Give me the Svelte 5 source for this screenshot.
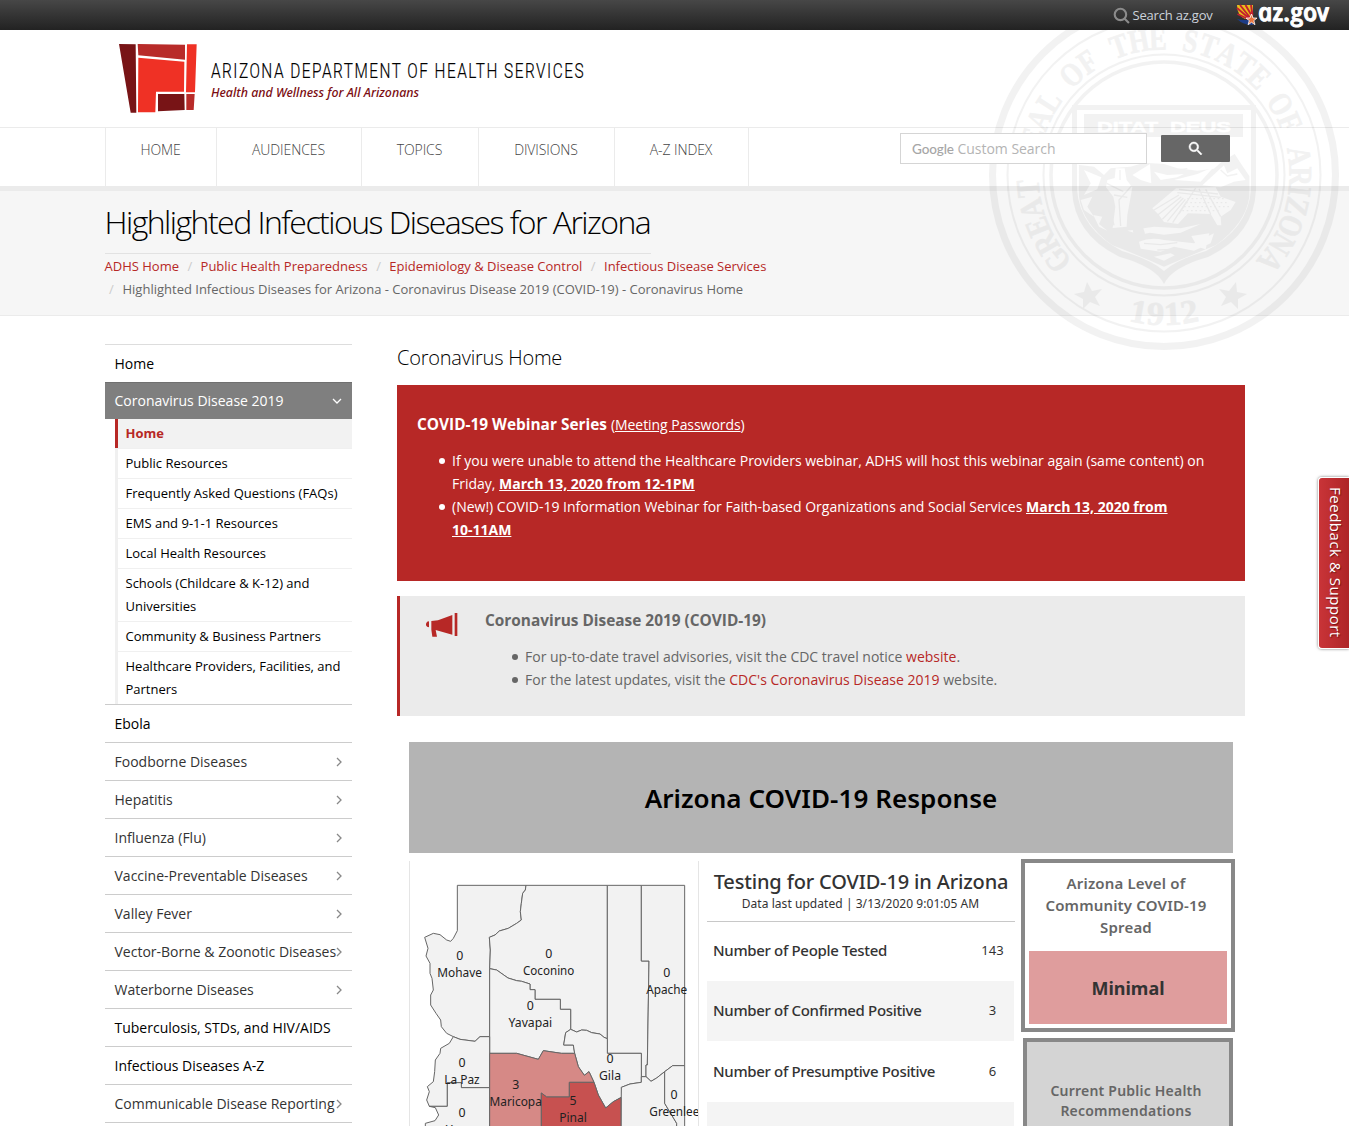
<script>
  const navItems = ['HOME', 'AUDIENCES', 'TOPICS', 'DIVISIONS', 'A-Z INDEX'];
  const crumbs = ['ADHS Home', 'Public Health Preparedness', 'Epidemiology & Disease Control', 'Infectious Disease Services'];
  const subItems = [
    'Public Resources',
    'Frequently Asked Questions (FAQs)',
    'EMS and 9-1-1 Resources',
    'Local Health Resources',
    'Schools (Childcare & K-12) and Universities',
    'Community & Business Partners',
    'Healthcare Providers, Facilities, and Partners'
  ];
  const topics = [
    { label: 'Ebola', more: false },
    { label: 'Foodborne Diseases', more: true },
    { label: 'Hepatitis', more: true },
    { label: 'Influenza (Flu)', more: true },
    { label: 'Vaccine-Preventable Diseases', more: true },
    { label: 'Valley Fever', more: true },
    { label: 'Vector-Borne & Zoonotic Diseases', more: true },
    { label: 'Waterborne Diseases', more: true },
    { label: 'Tuberculosis, STDs, and HIV/AIDS', more: false },
    { label: 'Infectious Diseases A-Z', more: false },
    { label: 'Communicable Disease Reporting', more: true },
    { label: '', more: false }
  ];
  const stats = [
    { label: 'Number of People Tested', value: '143' },
    { label: 'Number of Confirmed Positive', value: '3' },
    { label: 'Number of Presumptive Positive', value: '6' },
    { label: '', value: '' }
  ];
  const counties = [
    { name: 'Mohave', n: 0, x: 179, y: 318, w: 134 },
    { name: 'Coconino', n: 0, x: 446, y: 312, w: 154 },
    { name: 'Apache', n: 0, x: 800, y: 369, w: 123 },
    { name: 'Yavapai', n: 0, x: 391, y: 468, w: 131 },
    { name: 'La Paz', n: 0, x: 186, y: 639, w: 106 },
    { name: 'Gila', n: 0, x: 630, y: 627, w: 66 },
    { name: 'Maricopa', n: 3, x: 347, y: 705, w: 157 },
    { name: 'Pinal', n: 5, x: 519, y: 753, w: 83 },
    { name: 'Greenlee', n: 0, x: 822, y: 735, w: 150 },
    { name: 'Yuma', n: 0, x: 186, y: 789, w: 98 }
  ];

  // Letters of the seal's legend, spread round the ring by relative width.
  const legend = 'GREAT SEAL OF THE STATE OF ARIZONA';
  const relative = { I: 0.55, ' ': 0.8, S: 0.9, E: 0.95 };
  const widths = [...legend].map((c) => relative[c] ?? 1.05);
  const total = widths.reduce((a, b) => a + b, 0);
  let run = 0;
  const ring = [...legend].map((c, i) => {
    const mid = run + widths[i] / 2;
    run += widths[i];
    return { c, a: -133 + (266 * mid) / total };
  });
  const year = [...'1912'].map((c, i) => ({ c, a: 10.5 - i * 7 }));
</script>

<div class="page">
  <header>
    <div class="topbar">
      <svg class="lens" viewBox="0 0 16 16"><circle cx="7" cy="7" r="5.4" /><path d="M11 11l4 4" /></svg>
      <span class="find">Search az.gov</span>
      <svg class="azgov" viewBox="0 0 96 24">
        <path fill="#e8c01c" d="M1 2H17V16H9Q1 12 1 2Z" />
        <g stroke="#c3202f" stroke-width="1.9" fill="none"><path d="M1 5L15 17M4 2L16 17M9.500 2L16.500 14M15 2L16.500 12M1.500 11L14 17" /></g>
        <path fill="#1d3c86" d="M1 16Q8 18 17 16V22Q7 22 1 16Z" />
        <path fill="#e9743d" stroke="#fff" stroke-width=".8" d="M15.500 11l1.500 4 4 .1-3.200 2.500 1.200 4.100-3.500-2.400-3.400 2.400 1.200-4.100-3.300-2.500 4-.1z" />
        <text transform="translate(23.500 17.500) skewX(12)" textLength="71" lengthAdjust="spacingAndGlyphs">az.gov</text>
      </svg>
    </div>

    <div class="brand">
      <svg class="mark" viewBox="54 39 240 213">
        <path fill="#781416" d="M57 42L107 43 109 248H92ZM174 192H253L254 240 174 244Z" />
        <path fill="#b82b29" d="M113 42L255 44V89L115 76ZM259 192H284L281 240 259 240Z" />
        <path fill="#ef3125" d="M115 83L253 95 252 185H168L166 247H114ZM261 43H290L285 187H258Z" />
      </svg>
      <svg class="wordmark" viewBox="0 0 380 50">
        <text class="name" x="0" y="19.500" textLength="374" lengthAdjust="spacingAndGlyphs">ARIZONA DEPARTMENT OF HEALTH SERVICES</text>
        <text class="tag" x="0" y="39" textLength="208" lengthAdjust="spacingAndGlyphs">Health and Wellness for All Arizonans</text>
      </svg>
    </div>

    <nav>
      <ul class="menu">
        {#each navItems as item}<li>{item}</li>{/each}
      </ul>
      <div class="search">
        <div class="field"><span class="goog">Google</span><span class="hint">Custom Search</span></div>
        <button aria-label="search">
          <svg viewBox="0 0 13 13"><path d="M9.290 8.170h-.590l-.2-.2a4.800 4.800 0 0 0 1.170-3.140 4.830 4.830 0 1 0-4.830 4.840 4.800 4.800 0 0 0 3.140-1.170l.2.2v.590L11.890 13 13 11.890zM4.830 8.170a3.340 3.340 0 1 1 0-6.680 3.340 3.340 0 0 1 0 6.680z" /></svg>
        </button>
      </div>
    </nav>
  </header>

  <section class="titlebar">
    <h1>Highlighted Infectious Diseases for Arizona</h1>
    <div class="crumbs">
      {#each crumbs as crumb, i}{#if i}<i>/</i>{/if}<a href="#top">{crumb}</a>{/each}
    </div>
    <div class="crumbs last"><i>/</i><span>Highlighted Infectious Diseases for Arizona - Coronavirus Disease 2019 (COVID-19) - Coronavirus Home</span></div>
  </section>

  <svg class="seal" viewBox="-176 -176 352 352">
    <g opacity=".048">
      <g fill="none" stroke="#000">
        <circle r="171.500" stroke-width="7" />
        <circle r="156.500" stroke-width="2" />
        <circle r="120.500" stroke-width="2" />
        <circle r="113" stroke-width="3.500" />
      </g>
      {#each ring as { c, a }}
        <text class="legend" transform="rotate({a}) translate(0 -125.500) scale(.8 1)">{c}</text>
      {/each}
      {#each year as { c, a }}
        <text class="legend year" transform="rotate({a}) translate(0 150) scale(1.050 1)">{c}</text>
      {/each}
      <path d="M-77 107l5 9 10-2-7 8 5 9-10-4-7 7v-10l-9-5 10-2zM72 107l1 10 10 2-9 5v10l-7-7-10 4 5-9-7-8 10 2z" />
      <path fill-rule="evenodd" d="M-92-70H92V15Q90 60 44 82Q8 92 0 109Q-8 92-44 82Q-90 60-92 15ZM-87-65V15Q-84 54-42 76Q-12 85 0 96Q12 85 42 76Q84 54 87 15V-65Z" />
      <path d="M-80-61H79V-38H-80Z" />
      <text class="motto" x="-67" y="-43.500" textLength="61" lengthAdjust="spacingAndGlyphs">DITAT</text>
      <text class="motto" x="6" y="-43.500" textLength="61" lengthAdjust="spacingAndGlyphs">DEUS</text>
      <g transform="translate(-100 -75) scale(.3333)">
        <path d="M45 195L90 200 120 225 140 205 200 200 240 188 300 192 340 205 400 212 450 206 470 188 512 162 530 190 556 228V290Q545 370 455 436Q390 462 300 500Q215 462 145 436Q55 370 45 290Z" />
        <g fill="#fff">
          <path d="M60 210L112 232 100 268 60 285 80 250ZM205 225L258 192 262 250 230 240ZM330 240L400 222 450 200 410 245ZM415 256L480 196 490 220 520 205 545 240 510 245 470 262ZM270 215L310 225 360 222 340 232 290 240Z" />
          <path d="M50 300L85 290 70 320 90 350 60 330ZM88 345L115 350 105 372 130 392 105 380Z" />
          <path d="M155 205H182L188 240 205 262 200 290 190 345 188 380 146 384 154 320 148 290 126 262 130 240 152 234Z" />
          <path d="M336 265L265 325 285 345 300 366 342 372 372 340 440 342 460 376 472 376 470 350 500 330 515 306 470 290 455 262Z" />
          <path d="M190 392L270 380 350 385 410 372 350 398 300 404 258 398 230 404ZM225 425Q260 410 300 420L390 430 450 400 440 430 390 452 330 440 290 455 230 446ZM382 408L436 400 425 448 400 440ZM270 470L320 460 332 466 300 482Z" />
        </g>
        <g fill="none" stroke="#000" stroke-width="4">
          <path d="M168 210V240M128 250L178 275M205 255L165 300 170 378M150 285L190 292M120 250L150 376M210 270L222 390M345 285L270 330M352 290L282 344M358 294L295 358M364 298L310 364M368 304L326 368M345 268L462 282M340 278L470 292M395 264L345 342M405 266L440 342M425 268L470 350" />
          <path stroke-dasharray="5 8" d="M370 296H480M366 308H490M360 320H495M355 332H470" />
          <path d="M290 205L330 212 370 206M470 210L490 228 520 222M240 430L290 434 340 428M280 450L330 448" />
        </g>
        <path d="M205 384L235 376 243 400Q225 430 210 408Z" />
      </g>
    </g>
  </svg>

  <div class="columns">
    <aside>
      <div class="item">Home</div>
      <div class="item open">Coronavirus Disease 2019<svg viewBox="0 0 10 10"><path d="M1 3l4 4 4-4" /></svg></div>
      <ul class="sub">
        <li class="current">Home</li>
        {#each subItems as item}<li>{item}</li>{/each}
      </ul>
      {#each topics as { label, more }}
        <div class="item topic" class:more>{label}{#if more}<svg viewBox="0 0 10 10"><path d="M3 1l4 4-4 4" /></svg>{/if}</div>
      {/each}
    </aside>

    <main>
      <h2>Coronavirus Home</h2>
      <section class="webinar">
        <h3>COVID-19 Webinar Series <small>(<a href="#top">Meeting Passwords</a>)</small></h3>
        <ul>
          <li>If you were unable to attend the Healthcare Providers webinar, ADHS will host this webinar again (same content) on<br />Friday, <a href="#top"><b>March 13, 2020 from 12-1PM</b></a></li>
          <li>(New!) COVID-19 Information Webinar for Faith-based Organizations and Social Services <a href="#top"><b>March 13, 2020 from<br />10-11AM</b></a></li>
        </ul>
      </section>

      <section class="notice">
        <svg viewBox="108 816 96 76"><path d="M194 818h8v69h-8zM124 842L144 840 187 824V883L137 869 141 889H127L124 868ZM108 850Q110 843 117 843V861Q110 861 108 855Z" /></svg>
        <div>
          <h3>Coronavirus Disease 2019 (COVID-19)</h3>
          <ul>
            <li>For up-to-date travel advisories, visit the CDC travel notice <a href="#top">website</a>.</li>
            <li>For the latest updates, visit the <a href="#top">CDC's Coronavirus Disease 2019</a> website.</li>
          </ul>
        </div>
      </section>

      <section class="dash">
        <div class="dashtitle">Arizona COVID-19 Response</div>
        <div class="panels">
          <svg class="map" viewBox="30 33 864 795">
            <g class="shape">
              <path d="M172 106H378L376 120 368 130 364 160 361 185 364 210 350 220 325 235 298 243 285 255 268 262 271 300 269 356V560L240 560 225 574 180 568 160 560 140 550 124 530 122 510 108 490 92 465 92 435 100 420 96 385 90 370 90 340 78 318 84 295 74 262 100 250 120 254 140 270 152 274 160 265 172 242Z" />
              <path d="M378 106H622V566L612 562 600 552 575 548 560 541 545 540 530 546 512 538V478H481V448H405V419H390V402L365 394 350 392 324 384 290 360 269 356 271 300 268 262 285 255 298 243 325 235 350 220 364 210 361 185 364 160 368 130 376 120Z" />
              <path d="M269 356L290 360 324 384 350 392 365 394 390 402V419H405V448H481V478H512V538L497 548 491 585H520L524 610H484L430 602 415 628 350 610H269Z" />
              <path d="M622 106H724V333H747L742 645H738V680H724V610H622Z" />
              <path d="M724 106H854V647H818L794 665 770 684 753 694 738 680V645H742L747 333H724Z" />
              <path d="M512 538L530 546 545 540 560 541 575 548 600 552 612 562 622 566V610H724V697L690 702 664 712 667 740 640 755 617 774 595 735 582 697 567 665 553 676 535 650 524 610 520 585H491L497 548Z" />
              <path d="M160 560L180 568 225 574 240 560H269V713H184V698H142V769H88L80 750 88 725 82 710 100 695 104 665 106 630 120 610 122 595 148 580Z" />
              <path d="M88 769H142V698H184V713H269V840H76V820L105 812 116 795 106 773Z" />
              <path d="M664 712L690 702 724 697V680H738L753 694 770 684 794 665V760L830 820V840H663Z" />
              <path d="M794 665L818 647H854V840H830V820L794 760Z" />
            </g>
            <path class="shape" fill="#d68986" d="M269 610H350L415 628 430 602 484 610H524L535 650 553 676 567 665 582 697H508V741H440L424 729V840H269Z" />
            <path class="shape" fill="#c75150" d="M424 729L440 741H508V697H582L595 735 617 774 640 755 663 743V840H424Z" />
            {#each counties as { name, n, x, y, w }}
              <text {x} y={y + 13}>{n}</text>
              <text x={name === 'Greenlee' ? 823 : x} y={y + 64} textLength={w} lengthAdjust="spacingAndGlyphs">{name}</text>
            {/each}
          </svg>

          <div class="testing">
            <h4>Testing for COVID-19 in Arizona</h4>
            <p>Data last updated | 3/13/2020 9:01:05 AM</p>
            {#each stats as { label, value }}
              <div class="row"><span>{label}</span><em>{value}</em></div>
            {/each}
          </div>

          <div class="right">
            <div class="level">
              <div class="ask">Arizona Level of<br />Community COVID-19<br />Spread</div>
              <div class="minimal">Minimal</div>
            </div>
            <div class="recs">Current Public Health<br />Recommendations</div>
          </div>
        </div>
      </section>
    </main>
  </div>

  <div class="feedback">Feedback &amp; Support</div>
</div>

<style>
  :global(body) { background: #fff; }
  .page { position: relative; width: 1349px; height: 1126px; overflow: hidden; font-family: 'Open Sans', 'Noto Sans', sans-serif; font-size: 14px; line-height: 23px; color: #000; }
  ul { list-style: none; margin: 0; padding: 0; }
  h1, h2, h3, h4, p { margin: 0; font-weight: 400; }
  a { color: #b72826; text-decoration: none; }

  .topbar { position: relative; z-index: 2; display: flex; align-items: center; height: 30px; padding-left: 1113px; background: linear-gradient(#474747, #222); }
  .lens { width: 17px; height: 17px; fill: none; stroke: #8b8b8b; stroke-width: 2; }
  .find { margin-left: 2.5px; width: 81.5px; font-size: 13px; letter-spacing: -.2px; white-space: nowrap; color: #ccd2db; }
  .azgov { margin-left: 22px; width: 96px; height: 24px; overflow: visible; }
  .azgov text { font: italic 600 25px 'Open Sans', sans-serif; fill: #fff; stroke: #fff; stroke-width: 1px; stroke-linejoin: round; }

  .brand { display: flex; height: 84px; padding: 13px 0 0 118px; }
  .mark { width: 80px; height: 71px; }
  .wordmark { width: 380px; height: 50px; margin: 15px 0 0 12.5px; overflow: visible; }
  .name { font: 300 21px 'Roboto', sans-serif; fill: #000; stroke: #000; stroke-width: .2px; letter-spacing: 2px; }
  .tag { font: italic 500 12.5px 'Noto Sans', sans-serif; fill: #7b0d12; }

  nav { display: flex; height: 58px; padding-left: 105px; border-top: 1px solid #ebebeb; border-bottom: 5px solid #ebebeb; }
  .menu { display: grid; grid-template-columns: 111px 145px 117px 136px 134px; border-right: 1px solid #ebebeb; font-weight: 300; letter-spacing: -.1px; color: #444; text-align: center; }
  .menu li { border-left: 1px solid #ebebeb; padding: 10px 1px 0 0; }
  .search { position: relative; z-index: 2; display: flex; margin-left: 151px; padding-top: 5px; gap: 14px; }
  .field { box-sizing: border-box; display: flex; align-items: center; width: 247px; height: 31px; padding-left: 11px; border: 1px solid #d5d5d5; background: #fff; }
  .goog { width: 45.5px; font: 500 13.5px 'Lato', sans-serif; letter-spacing: -.1px; color: #a6a6a6; }
  .hint { font-size: 14px; letter-spacing: -.03px; color: #b4b4b4; }
  button { display: grid; place-items: center; margin-top: 2px; width: 69px; height: 27px; padding: 0; border: 0; border-radius: 1px; background: #666; }
  button svg { width: 13px; height: 13px; fill: #fff; stroke: #fff; stroke-width: .5; overflow: visible; }

  .titlebar { box-sizing: border-box; height: 125px; padding: 7px 0 0 104.5px; background: #f6f6f6; border-bottom: 1px solid #ebebeb; }
  h1 { width: 546px; height: 55px; margin-bottom: 1px; border-bottom: 1px solid #e2e2e2; font-size: 32px; font-weight: 300; line-height: 48px; letter-spacing: -1.54px; white-space: nowrap; }
  .crumbs { font-size: 13px; color: #666; white-space: nowrap; }
  .crumbs i { display: inline-block; width: 21.6px; text-align: center; font-style: normal; color: #ccc; }
  .last i { width: 14px; margin-right: 4px; }

  .seal { position: absolute; z-index: 1; left: 988px; top: -1px; width: 352px; height: 352px; }
  .legend { font: 700 33px 'Liberation Serif', serif; text-anchor: middle; stroke: #000; stroke-width: .8px; }
  .motto { font: 700 15px 'Liberation Sans', sans-serif; fill: #fff; stroke: #fff; stroke-width: .5px; }

  .columns { display: grid; grid-template-columns: 247px 848px; column-gap: 45px; padding: 28px 0 0 105px; }
  .item { box-sizing: border-box; position: relative; display: flex; align-items: center; height: 38px; padding-left: 9.5px; border-top: 1px solid #ddd; white-space: nowrap; }
  .item svg { position: absolute; right: 8px; top: 14px; width: 10px; height: 10px; fill: none; stroke: #888; stroke-width: 1.3; }
  .open { height: 37px; padding-bottom: 1px; background: #7f7f7f; border-top: 1px solid #707070; color: #fff; }
  .open svg { right: 10px; top: 13px; stroke: #fff; }
  .topic { border-color: #ccc; }
  .more { color: #333; }
  .sub { margin-left: 10px; border-left: 3px solid #f0f0f0; font-size: 13px; }
  .sub li { padding: 3px 4px 3px 7.5px; border-top: 1px solid #f0f0f0; }
  .sub .current { margin-left: -3px; border-left: 3px solid #b72826; border-top: 0; background: #f2f2f2; color: #b72826; font-weight: 700; }

  h2 { height: 41px; font-size: 20px; font-weight: 300; line-height: 27px; letter-spacing: -.22px; }
  h3 { font-size: 15.4px; font-weight: 700; }
  h3 small { font-size: 14px; font-weight: 400; letter-spacing: -.05px; }
  .webinar { box-sizing: border-box; height: 196px; padding: 28px 20px 0; background: #b72826; color: #fff; }
  .webinar a { color: #fff; text-decoration: underline; }
  .webinar ul { margin: 13px 0 0 35px; }
  main li { position: relative; white-space: nowrap; }
  main li::before { content: ''; position: absolute; left: -13px; top: 8.500px; width: 6px; height: 6px; border-radius: 50%; background: currentColor; }
  .notice { box-sizing: border-box; display: flex; margin-top: 15px; height: 120px; padding: 13px 0 0 26px; border-left: 3px solid #b72826; background: #ebebeb; color: #666; }
  .notice svg { width: 32px; height: 26px; margin-top: 3px; fill: #b72826; }
  .notice > div { margin-left: 27px; }
  .notice ul { margin: 13px 0 0 40px; }

  .dash { margin: 26px 0 0 12px; font-family: 'Noto Sans', sans-serif; color: #333; }
  .dashtitle { width: 824px; height: 111px; line-height: 113px; background: #b4b4b4; text-align: center; font-size: 26px; font-weight: 600; letter-spacing: .06px; color: #000; }
  .panels { display: flex; padding-top: 6px; height: 300px; }
  .map { margin-top: 2px; width: 288px; height: 265px; border: solid #e5e5e5; border-width: 0 1px; flex: none; }
  .shape { stroke: #666; stroke-width: 3; stroke-linejoin: round; }
  g.shape { fill: #f2f2f2; }
  .map text { font: 37px 'Noto Sans', sans-serif; text-anchor: middle; fill: #222; }
  .testing { width: 308px; margin-left: 8px; flex: none; }
  .testing h4 { padding-top: 9px; height: 25px; line-height: 28px; font-size: 20px; font-weight: 500; letter-spacing: -.15px; text-align: center; white-space: nowrap; }
  .testing p { height: 28px; padding-right: 1px; line-height: 22px; border-bottom: 1px solid #c8c8c8; font-size: 12px; text-align: center; white-space: nowrap; letter-spacing: .05px; }
  .row { box-sizing: border-box; display: flex; align-items: center; width: 307px; height: 60px; padding-bottom: 2px; }
  .row:nth-child(3) { height: 59px; }
  .row:nth-child(5) { height: 61px; padding-bottom: 1px; }
  .row:nth-child(even) { background: #f4f4f4; }
  .row span { padding-left: 6px; width: 258px; font-size: 15px; font-weight: 500; letter-spacing: -.33px; white-space: nowrap; }
  .row em { width: 43px; font-style: normal; font-size: 13px; text-align: center; }
  .right { margin-left: 6px; flex: none; text-align: center; font-weight: 600; color: #666; }
  .level { box-sizing: border-box; width: 214px; height: 173px; padding: 9px 4px 4px; border: 4px solid #888; }
  .ask { height: 79px; line-height: 22px; font-size: 15px; letter-spacing: .17px; padding-right: 4px; }
  .minimal { height: 73px; line-height: 74px; background: #df9d9d; color: #333; font-size: 18px; font-weight: 700; }
  .recs { box-sizing: border-box; width: 210px; height: 150px; margin: 6px 0 0 2px; padding: 39px 4px 0 0; border: 4px solid #888; background: #d4d4d4; font-size: 14px; letter-spacing: .22px; line-height: 20px; }

  .feedback { box-sizing: border-box; position: absolute; right: 0; top: 477px; width: 31px; height: 172px; padding-top: 9px; writing-mode: vertical-rl; line-height: 27px; font-size: 15px; letter-spacing: .52px; white-space: nowrap; color: #fff; background: linear-gradient(90deg, #c93438, #ae2527); border: 1px solid #fff; border-right: 0; border-radius: 4px 0 0 4px; box-shadow: 0 0 3px #777; text-shadow: 1px -1px 1px #701010; }
</style>
